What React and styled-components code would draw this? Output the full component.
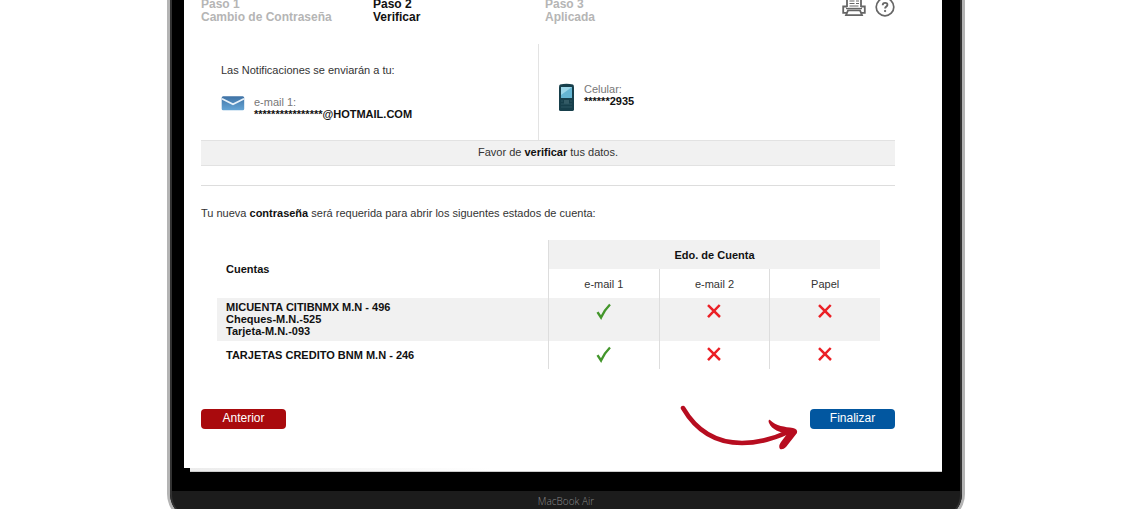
import React from 'react';
import styled, { createGlobalStyle } from 'styled-components';

const GlobalStyle = createGlobalStyle`
  * {
    box-sizing: border-box;
  }

  body {
    margin: 0;
    background: #fff;
    font-family: 'Liberation Sans', Arial, sans-serif;
    font-size: 11px;
    line-height: 12px;
    color: #333;
  }

  button {
    font-family: inherit;
    padding: 0;
    border: none;
    cursor: pointer;
  }
`;

const Pagina = styled.div`
  height: 100vh;
  overflow: hidden;
  padding: 0 167px;
`;

const Laptop = styled.div`
  background: #000;
  border: 3px solid #b4b4b4;
  border-top: none;
  border-radius: 0 0 28px 28px;
  overflow: hidden;
`;

const Marco = styled.div`
  border: 2px solid #333;
  border-width: 0 2px;
  padding: 0 18px 19px 12px;
`;

const Pantalla = styled.main`
  background: #fff;
  padding: 0 47px 39px 17px;
`;

const Sombra = styled.div`
  height: 4px;
  margin-left: 6px;
  background: linear-gradient(to right, #ececec, #fff 40%);
  border-bottom: 1px solid #ccc;
`;

const Base = styled.footer`
  height: 28px;
  padding-top: 3px;
  background: #1c1c1c;
  border: 2px solid #333;
  border-top: none;
  border-radius: 0 0 24px 24px;
  color: #8a8a8a;
  font-family: 'Open Sans', sans-serif;
  font-weight: 300;
  font-size: 10px;
  line-height: 14px;
  text-align: center;
`;

const Encabezado = styled.header`
  display: flex;
  height: 44px;
`;

const Pasos = styled.ol`
  flex: 1;
  display: flex;
  list-style: none;
  margin: -2px 0 0;
  padding: 0;
`;

const Paso = styled.li`
  width: 172px;
  color: ${({ $activo }) => ($activo ? '#111' : '#b5b5b5')};
  font-size: 12px;
  font-weight: bold;
  line-height: 13px;
`;

const Herramientas = styled.div`
  display: flex;
  gap: 9px;
  height: 17px;
  align-items: flex-end;
`;

const BotonIcono = styled.button`
  display: flex;
  background: transparent;
`;

const Contactos = styled.section`
  display: flex;
  height: 96px;
`;

const Columna = styled.div`
  width: ${({ $ancho }) => $ancho};
  padding: 20px 19px 0 ${({ $linea }) => ($linea ? '20px' : '19px')};
  border-right: ${({ $linea }) => ($linea ? '1px solid #e3e3e3' : 'none')};
`;

const Intro = styled.p`
  margin: 0;
  height: 32px;
`;

const Contacto = styled.div`
  display: flex;
  gap: 9px;
  align-items: flex-start;
  padding-top: ${({ $alto }) => ($alto ? '19px' : '0')};

  svg {
    flex: none;
  }
`;

const Etiqueta = styled.div`
  color: #777;
`;

const Dato = styled.div`
  color: #111;
  font-weight: bold;
`;

const Aviso = styled.p`
  margin: 0;
  padding: 5px 0 7px;
  background: #f1f1f1;
  border: 1px solid #e2e2e2;
  border-width: 1px 0;
  text-align: center;
  height: 26px;

  strong {
    color: #111;
  }
`;

const Separador = styled.hr`
  margin: 19px 0 0;
  border: none;
  border-top: 1px solid #ddd;
`;

const Texto = styled.p`
  margin: 21px 0;

  strong {
    color: #111;
  }
`;

const TablaCuentas = styled.table`
  width: calc(100% - 31px);
  margin: 0 15px 0 16px;
  border-collapse: separate;
  border-spacing: 0;
  table-layout: fixed;
`;

const Fila = styled.tr`
  height: ${({ $alto }) => $alto};
  background: ${({ $gris }) => ($gris ? '#f1f1f1' : '#fff')};
`;

const Titulo = styled.th`
  width: ${({ $ancho }) => $ancho || 'auto'};
  padding: 0 9px;
  background: ${({ $gris }) => ($gris ? '#f1f1f1' : 'transparent')};
  border-left: ${({ $gris }) => ($gris ? '1px solid #ddd' : 'none')};
  color: #111;
  text-align: ${({ $gris }) => ($gris ? 'center' : 'left')};
`;

const Medio = styled.th`
  padding: 0;
  border-left: 1px solid #ddd;
  font-weight: normal;
`;

const Cuenta = styled.th`
  padding: 3px 9px 4px;
  color: #111;
  text-align: left;
  vertical-align: middle;
`;

const Estado = styled.td`
  padding: 5px 0 0;
  border-left: 1px solid #ddd;
  text-align: center;
  vertical-align: top;

  svg {
    display: block;
    margin: 0 auto;
  }
`;

const Acciones = styled.div`
  position: relative;
  display: flex;
  justify-content: space-between;
  margin-top: 40px;
`;

const Boton = styled.button`
  width: 85px;
  height: 20px;
  padding-bottom: 2px;
  border-radius: 4px;
  background: ${({ $color }) => $color};
  color: #fff;
  font-size: 12px;
`;

const Flecha = styled.svg`
  position: absolute;
  top: -4px;
  right: 96px;
`;

const IconoImprimir = () => (
  <svg width="24" height="19" viewBox="0 0 24 19" fill="none" stroke="#666" aria-hidden="true">
    <path d="M5 9V0M19 9V0" strokeWidth="1.8" />
    <path d="M7.500 3h5M14 3h3M7.500 5.500h5M14 5.500h3M7.500 8h9" strokeWidth="1" />
    <path d="M5 8.500H1.200v6.300H5M19 8.500h3.800v6.300H19" strokeWidth="1.800" />
    <path d="M4 10.500h16" strokeWidth="1.400" />
    <path d="M6 12.300h12l2 4.800H4z" fill="#fff" strokeWidth="1.800" />
  </svg>
);

const IconoAyuda = () => (
  <svg width="20" height="20" viewBox="0 0 20 20" fill="none" stroke="#666" aria-hidden="true">
    <circle cx="10" cy="10" r="8.800" strokeWidth="1.700" />
    <path d="M7.700 8.200c0-3.200 4.900-3 4.700-.3-.1 1.600-2.300 1.700-2.300 3.700" strokeWidth="1.900" />
    <circle cx="10.100" cy="14" r=".7" fill="#666" />
  </svg>
);

const IconoCorreo = () => (
  <svg width="24" height="16" viewBox="0 0 24 16" aria-hidden="true">
    <defs>
      <linearGradient id="correo" x2="0" y2="1">
        <stop stopColor="#3f72a5" />
        <stop offset="1" stopColor="#65a5d5" />
      </linearGradient>
    </defs>
    <rect x=".7" y=".2" width="22.500" height="14" rx="1.500" fill="url(#correo)" />
    <path d="M1 2.700 12 8.300 23 2.700" fill="none" stroke="#e8f2fa" strokeWidth="1.700" />
  </svg>
);

const IconoCelular = () => (
  <svg width="17" height="29" viewBox="0 0 17 29" aria-hidden="true">
    <path d="M2 1.500Q8.500 0 15 1.500q1 .5 1 3v22q-.3 1.500-1.500 1.500h-12Q1 28 1 26.500v-22Q1 2 2 1.500z" fill="#173f4b" />
    <path d="M3 4h11v11H3z" fill="#65b5d2" />
    <path d="M3 4h11L3 12z" fill="#9cd6e8" />
    <path d="M6 17h5v4H6z" fill="#335a65" />
    <path d="M3 18h2M12 18h2M3 21h11M3 24h11" stroke="#2c5662" />
  </svg>
);

const Palomita = () => (
  <svg width="16" height="17" viewBox="0 0 16 17" role="img" aria-label="Sí">
    <path d="M1.500 9.200 5 14.500C7.500 9 10.500 5 14 1.500" fill="none" stroke="#43962b" strokeWidth="2.400" />
  </svg>
);

const Tache = () => (
  <svg width="16" height="17" viewBox="0 0 16 17" role="img" aria-label="No">
    <path d="M2 2.200 14 14M13.700 2 2 14.200" fill="none" stroke="#eb2026" strokeWidth="2.500" />
  </svg>
);

const pasos = [
  { numero: 'Paso 1', nombre: 'Cambio de Contraseña' },
  { numero: 'Paso 2', nombre: 'Verificar', activo: true },
  { numero: 'Paso 3', nombre: 'Aplicada' },
];

const cuentas = [
  {
    lineas: ['MICUENTA CITIBNMX M.N - 496', 'Cheques-M.N.-525', 'Tarjeta-M.N.-093'],
    medios: [true, false, false],
    alto: '43px',
  },
  {
    lineas: ['TARJETAS CREDITO BNM M.N - 246'],
    medios: [true, false, false],
    alto: '28px',
  },
];

const App = () => (
  <>
    <GlobalStyle />
    <Pagina>
      <Laptop>
        <Marco>
          <Pantalla>
            <Encabezado>
              <Pasos>
                {pasos.map((paso) => (
                  <Paso key={paso.numero} $activo={paso.activo}>
                    {paso.numero}
                    <br />
                    {paso.nombre}
                  </Paso>
                ))}
              </Pasos>
              <Herramientas>
                <BotonIcono aria-label="Imprimir"><IconoImprimir /></BotonIcono>
                <BotonIcono aria-label="Ayuda"><IconoAyuda /></BotonIcono>
              </Herramientas>
            </Encabezado>

            <Contactos>
              <Columna $ancho="338px" $linea>
                <Intro>Las Notificaciones se enviarán a tu:</Intro>
                <Contacto>
                  <IconoCorreo />
                  <div>
                    <Etiqueta>e-mail 1:</Etiqueta>
                    <Dato>****************@HOTMAIL.COM</Dato>
                  </div>
                </Contacto>
              </Columna>
              <Columna>
                <Contacto $alto>
                  <IconoCelular />
                  <div>
                    <Etiqueta>Celular:</Etiqueta>
                    <Dato>******2935</Dato>
                  </div>
                </Contacto>
              </Columna>
            </Contactos>

            <Aviso>Favor de <strong>verificar</strong> tus datos.</Aviso>
            <Separador />
            <Texto>
              Tu nueva <strong>contraseña</strong> será requerida para abrir los siguentes estados de cuenta:
            </Texto>

            <TablaCuentas>
              <thead>
                <Fila $alto="29px">
                  <Titulo rowSpan={2} $ancho="331px" scope="col">Cuentas</Titulo>
                  <Titulo colSpan={3} $gris scope="colgroup">Edo. de Cuenta</Titulo>
                </Fila>
                <Fila $alto="29px">
                  <Medio scope="col">e-mail 1</Medio>
                  <Medio scope="col">e-mail 2</Medio>
                  <Medio scope="col">Papel</Medio>
                </Fila>
              </thead>
              <tbody>
                {cuentas.map((cuenta, index) => (
                  <Fila key={index} $alto={cuenta.alto} $gris={index % 2 === 0}>
                    <Cuenta scope="row">
                      {cuenta.lineas.map((linea) => <div key={linea}>{linea}</div>)}
                    </Cuenta>
                    {cuenta.medios.map((activo, i) => (
                      <Estado key={i}>{activo ? <Palomita /> : <Tache />}</Estado>
                    ))}
                  </Fila>
                ))}
              </tbody>
            </TablaCuentas>

            <Acciones>
              <Boton $color="#a90a0d">Anterior</Boton>
              <Flecha width="120" height="46" viewBox="0 0 120 46" aria-hidden="true">
                <path d="M4 3C18 27 37 38 63 38c18 0 31-4 46-11" fill="none" stroke="#b70d20" strokeWidth="4.500" strokeLinecap="round" />
                <path d="M91 15c6 6 15 7 23 8q5 1 4 5l-11 14q-3 3-6 2-2-3 1-7l6-8c-7-2-15-4-18-11-1-2 0-4 1-3z" fill="#b70d20" />
              </Flecha>
              <Boton $color="#0257a0">Finalizar</Boton>
            </Acciones>
          </Pantalla>
          <Sombra />
        </Marco>
        <Base>MacBook Air</Base>
      </Laptop>
    </Pagina>
  </>
);

export default App;
